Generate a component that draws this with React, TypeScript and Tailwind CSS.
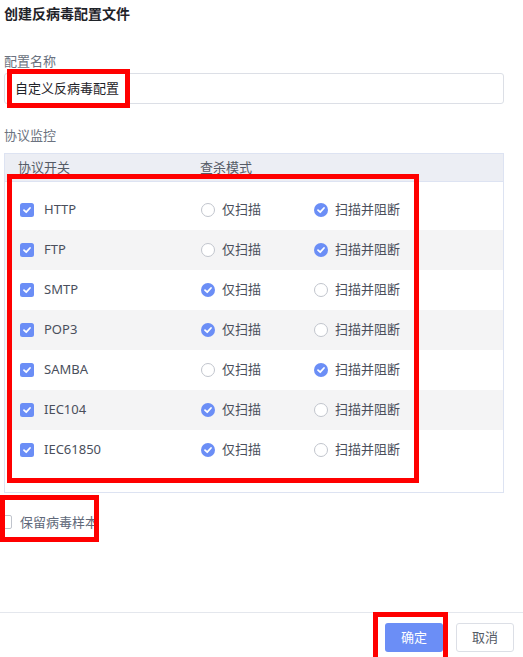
const rows = [
  { name: "HTTP", mode: "block" },
  { name: "FTP", mode: "block" },
  { name: "SMTP", mode: "scan" },
  { name: "POP3", mode: "scan" },
  { name: "SAMBA", mode: "block" },
  { name: "IEC104", mode: "scan" },
  { name: "IEC61850", mode: "scan" },
];

const Check = () => (
  <svg viewBox="0 0 14 14" className="w-[14px] h-[14px]">
    <rect x="0" y="0" width="14" height="14" rx="2.5" fill="#6b8ef6" />
    <path d="M4 7.2 L6.2 9.2 L10 5" fill="none" stroke="#fff" strokeWidth="1.8" strokeLinecap="round" strokeLinejoin="round" />
  </svg>
);

const Radio = ({ on }: { on: boolean }) =>
  on ? (
    <svg viewBox="0 0 14 14" className="w-[14px] h-[14px]">
      <circle cx="7" cy="7" r="7" fill="#6b8ef6" />
      <path d="M4 7.2 L6.2 9.2 L10 5" fill="none" stroke="#fff" strokeWidth="1.8" strokeLinecap="round" strokeLinejoin="round" />
    </svg>
  ) : (
    <svg viewBox="0 0 14 14" className="w-[14px] h-[14px]">
      <circle cx="7" cy="7" r="6.5" fill="#fff" stroke="#c0c4cc" strokeWidth="1" />
    </svg>
  );

const App = () => {
  return (
    <div
      className="relative w-[523px] h-[657px] overflow-hidden bg-white text-[13px]"
      style={{ fontFamily: '"Noto Sans", "Noto Sans CJK SC", sans-serif' }}
    >
      {/* Title */}
      <div className="mt-[4px] px-[4px] text-[14px] leading-[20px] font-bold text-[#1f2329]">
        创建反病毒配置文件
      </div>

      {/* Name field */}
      <div className="mt-[27px] px-[4px] leading-[20px] text-[#6b7280]">配置名称</div>
      <div className="mt-[2px] ml-[4px] w-[500px] h-[31px] border border-[#dcdfe6] rounded-[3px] flex items-center pl-[10px] text-[#1f2329]">
        自定义反病毒配置
      </div>

      {/* Protocol table */}
      <div className="mt-[21px] px-[4px] leading-[20px] text-[#6b7280]">协议监控</div>
      <div className="mt-[8px] ml-[4px] w-[500px] border border-[#dde3f2] pb-[22px]">
        <div className="h-[28px] pt-[1px] bg-[#eceef4] border-b border-[#dde3f2] flex items-center text-[#555b66]">
          <div className="w-[195px] pl-[13px]">协议开关</div>
          <div>查杀模式</div>
        </div>
        <div className="pt-[8px]">
          {rows.map((r, i) => (
            <div
              key={r.name}
              className={`h-[40px] flex items-center text-[#4a4f5c] ${i % 2 === 1 ? "bg-[#f4f4f5]" : "bg-white"}`}
            >
              <div className="w-[196px] pl-[15px] flex items-center gap-[10px]">
                <Check />
                <span>{r.name}</span>
              </div>
              <div className="w-[113px] flex items-center gap-[7px]">
                <Radio on={r.mode === "scan"} />
                <span>仅扫描</span>
              </div>
              <div className="flex items-center gap-[7px]">
                <Radio on={r.mode === "block"} />
                <span>扫描并阻断</span>
              </div>
            </div>
          ))}
        </div>
      </div>

      {/* Keep sample */}
      <div className="mt-[22px] ml-[-2px] flex items-center gap-[8px] h-[14px] text-[#606879]">
        <div className="w-[14px] h-[14px] border border-[#c0c4cc] rounded-[2px] bg-white" />
        <span className="leading-[20px]">保留病毒样本</span>
      </div>

      {/* Footer */}
      <div className="mt-[83px] border-t border-[#e4e7ed] flex justify-end gap-[13px] pr-[9px] pt-[10px]">
        <button className="w-[58px] h-[29px] rounded-[3px] bg-[#6b8ef6] text-white">确定</button>
        <button className="w-[58px] h-[29px] rounded-[3px] border border-[#dcdfe6] bg-white text-[#555b66]">取消</button>
      </div>

      {/* Annotation boxes */}
      <div className="absolute left-[7px] top-[69px] w-[123px] h-[39px] border-[5px] border-[#ff0000]" />
      <div className="absolute left-[7px] top-[174px] w-[412px] h-[309px] border-[5px] border-[#ff0000]" />
      <div className="absolute left-[0px] top-[495px] w-[99px] h-[47px] border-[5px] border-[#ff0000]" />
      <div className="absolute left-[373px] top-[612px] w-[75px] h-[50px] border-[5px] border-[#ff0000]" />
    </div>
  );
};

export default App;
